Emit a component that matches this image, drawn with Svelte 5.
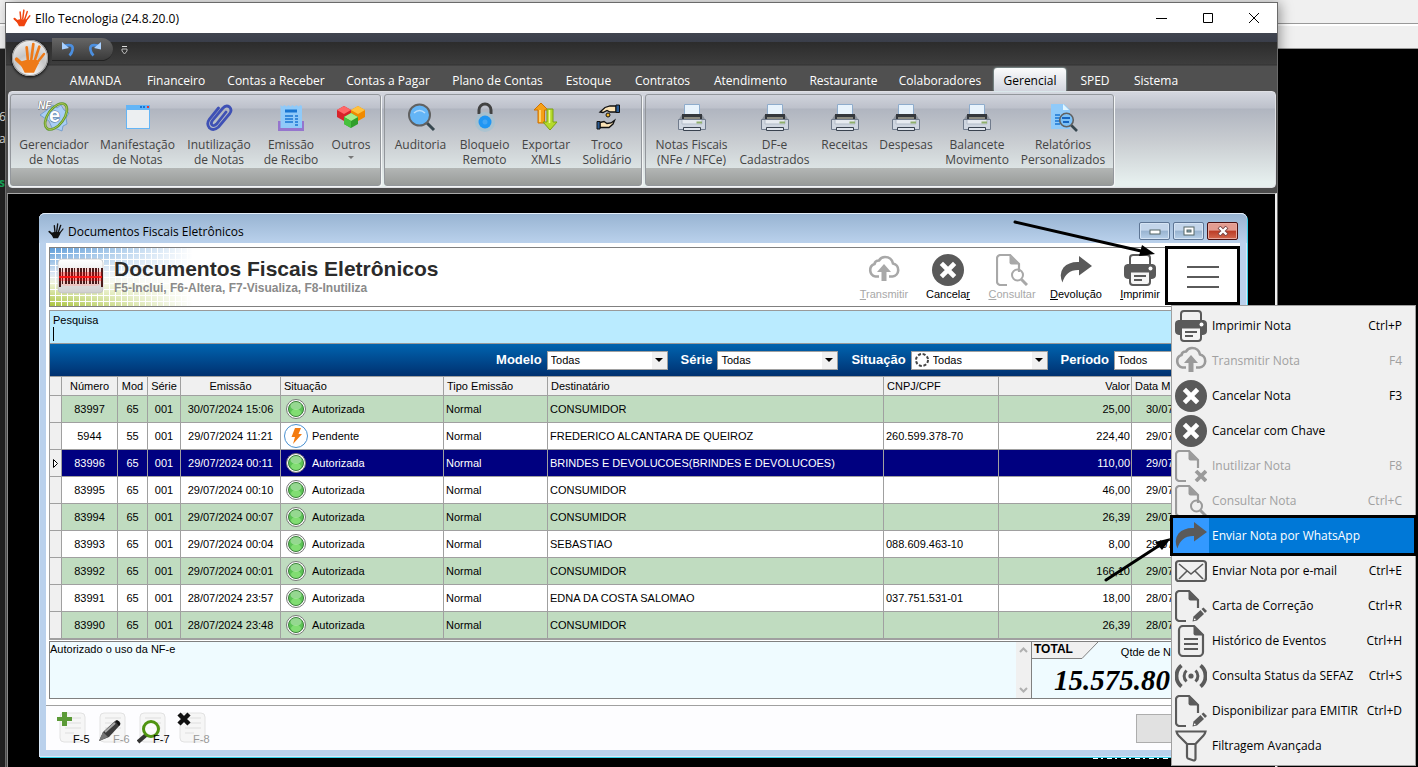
<script>
  const tabs = [
    { label: 'AMANDA', w: 79 }, { label: 'Financeiro', w: 82 }, { label: 'Contas a Receber', w: 118 },
    { label: 'Contas a Pagar', w: 106 }, { label: 'Plano de Contas', w: 113 }, { label: 'Estoque', w: 69 },
    { label: 'Contratos', w: 79 }, { label: 'Atendimento', w: 97 }, { label: 'Restaurante', w: 89 },
    { label: 'Colaboradores', w: 104 }, { label: 'Gerencial', w: 76 }, { label: 'SPED', w: 54 }, { label: 'Sistema', w: 68 }
  ];
  const groups = [
    [
      { icon: 'nfe', a: 'Gerenciador', b: 'de Notas', w: 80 },
      { icon: 'window', a: 'Manifestação', b: 'de Notas', w: 87 },
      { icon: 'clip', a: 'Inutilização', b: 'de Notas', w: 76 },
      { icon: 'receipt', a: 'Emissão', b: 'de Recibo', w: 68 },
      { icon: 'cubes', a: 'Outros', b: '', w: 52, drop: true }
    ],
    [
      { icon: 'lens', a: 'Auditoria', b: '', w: 65 },
      { icon: 'lock', a: 'Bloqueio', b: 'Remoto', w: 63 },
      { icon: 'arrows', a: 'Exportar', b: 'XMLs', w: 60 },
      { icon: 'hands', a: 'Troco', b: 'Solidário', w: 62 }
    ],
    [
      { icon: 'printer3d', a: 'Notas Fiscais', b: '(NFe / NFCe)', w: 85 },
      { icon: 'printer3d', a: 'DF-e', b: 'Cadastrados', w: 81 },
      { icon: 'printer3d', a: 'Receitas', b: '', w: 59 },
      { icon: 'printer3d', a: 'Despesas', b: '', w: 64 },
      { icon: 'printer3d', a: 'Balancete', b: 'Movimento', w: 78 },
      { icon: 'report', a: 'Relatórios', b: 'Personalizados', w: 94 }
    ]
  ];
  const actions = [
    { icon: 'cloud', pre: '', key: 'T', post: 'ransmitir', off: true },
    { icon: 'cancel', pre: 'Cancela', key: 'r', post: '' },
    { icon: 'docsearch', pre: '', key: 'C', post: 'onsultar', off: true },
    { icon: 'share', pre: '', key: 'D', post: 'evolução' },
    { icon: 'printer', pre: '', key: 'I', post: 'mprimir' }
  ];
  const rows = [
    ['83997', '65', '30/07/2024 15:06', 'Autorizada', 'CONSUMIDOR', '', '25,00', '30/07/2024'],
    ['5944', '55', '29/07/2024 11:21', 'Pendente', 'FREDERICO ALCANTARA DE QUEIROZ', '260.599.378-70', '224,40', '29/07/2024'],
    ['83996', '65', '29/07/2024 00:11', 'Autorizada', 'BRINDES E DEVOLUCOES(BRINDES E DEVOLUCOES)', '', '110,00', '29/07/2024'],
    ['83995', '65', '29/07/2024 00:10', 'Autorizada', 'CONSUMIDOR', '', '46,00', '29/07/2024'],
    ['83994', '65', '29/07/2024 00:07', 'Autorizada', 'CONSUMIDOR', '', '26,39', '29/07/2024'],
    ['83993', '65', '29/07/2024 00:04', 'Autorizada', 'SEBASTIAO', '088.609.463-10', '8,00', '29/07/2024'],
    ['83992', '65', '29/07/2024 00:01', 'Autorizada', 'CONSUMIDOR', '', '166,10', '29/07/2024'],
    ['83991', '65', '28/07/2024 23:57', 'Autorizada', 'EDNA DA COSTA SALOMAO', '037.751.531-01', '18,00', '28/07/2024'],
    ['83990', '65', '28/07/2024 23:48', 'Autorizada', 'CONSUMIDOR', '', '26,39', '28/07/2024']
  ];
  const menu = [
    { icon: 'printer', label: 'Imprimir Nota', key: 'Ctrl+P' },
    { icon: 'cloud', label: 'Transmitir Nota', key: 'F4', off: true },
    { icon: 'cancel', label: 'Cancelar Nota', key: 'F3' },
    { icon: 'cancel', label: 'Cancelar com Chave', key: '' },
    { icon: 'docx', label: 'Inutilizar Nota', key: 'F8', off: true },
    { icon: 'docsearch', label: 'Consultar Nota', key: 'Ctrl+C', off: true },
    { icon: 'share', label: 'Enviar Nota por WhatsApp', key: '', active: true },
    { icon: 'mail', label: 'Enviar Nota por e-mail', key: 'Ctrl+E' },
    { icon: 'docpen', label: 'Carta de Correção', key: 'Ctrl+R' },
    { icon: 'doclines', label: 'Histórico de Eventos', key: 'Ctrl+H' },
    { icon: 'signal', label: 'Consulta Status da SEFAZ', key: 'Ctrl+S' },
    { icon: 'docpen', label: 'Disponibilizar para EMITIR', key: 'Ctrl+D' },
    { icon: 'funnel', label: 'Filtragem Avançada', key: '' }
  ];
  const footer = [
    { icon: 'add', label: 'F-5' }, { icon: 'edit', label: 'F-6', off: true },
    { icon: 'view', label: 'F-7' }, { icon: 'del', label: 'F-8', off: true }
  ];
  const bars = Array.from({ length: 15 }, (_, i) => ({ x: 9 + i * 3, w: i % 4 === 1 ? 1 : 2, tall: i === 0 || i === 14 }));
</script>

{#snippet hand(color)}
  <g fill="none" stroke={color} stroke-linecap="round">
    <path d="M10.500 14 9.500 4" stroke-width="2" />
    <path d="M13 13 14.500 1.500" stroke-width="2" />
    <path d="M15.500 14 19 3.500" stroke-width="2" />
    <path d="M17 16 22.500 9" stroke-width="1.800" />
    <path d="M8.500 19 2 13" stroke-width="2.800" />
  </g>
  <path d="M9 13.500 17.500 13.500 18.500 16 15 23 8 23 4 15Z" fill={color} />
{/snippet}

{#snippet docShape()}
  <path d="M11 31H4.500A3.500 3.500 0 0 1 1 27.500V4.500A3.500 3.500 0 0 1 4.500 1H14L23 10V18" fill="none" stroke="currentColor" stroke-width="2.200" />
  <path d="M13.500 1.500V8.500Q13.500 10.500 15.500 10.500H22.500Z" fill="currentColor" />
{/snippet}

{#snippet glyph(name)}
  <svg class="glyph" viewBox="0 0 32 32" width="32" height="32" aria-hidden="true">
    {#if name === 'printer'}
      <path d="M6 10V4A3 3 0 0 1 9 1H23A3 3 0 0 1 26 4V10" fill="none" stroke="currentColor" stroke-width="2" />
      <path d="M3.500 10H28.500Q32 10.500 32 14V21Q32 24.500 28 25H4Q0 24.500 0 21V14Q0 10.500 3.500 10Z" fill="currentColor" />
      <circle cx="26.500" cy="14.500" r="2" fill="#fff" />
      <path d="M7 18.500H25V28A3 3 0 0 1 22 31H10A3 3 0 0 1 7 28Z" fill="#f5f5f5" />
      <path d="M6 23V28A3 3 0 0 0 9 31H23A3 3 0 0 0 26 28V23" fill="none" stroke="currentColor" stroke-width="2" />
      <path d="M10 22H22M10 26H18" stroke="currentColor" stroke-width="2" />
    {:else if name === 'cloud'}
      <path d="M11 22.500H7.500A6.500 6.500 0 0 1 6.500 10Q7 6.500 11 6.500Q13 3 17 3Q23.500 3 25 9.500A6.600 6.600 0 0 1 24.500 22.500H21" fill="none" stroke="currentColor" stroke-width="2.600" />
      <path d="M16 10 23 18H18.500V27H13.500V18H9Z" fill="currentColor" />
    {:else if name === 'cancel'}
      <circle cx="16" cy="16" r="16" fill="currentColor" />
      <path d="M11 11 21 21M21 11 11 21" stroke="#fff" stroke-width="4.600" stroke-linecap="square" />
    {:else if name === 'docx'}
      {@render docShape()}
      <path d="M21 21 31 31M31 21 21 31" stroke="currentColor" stroke-width="3.800" />
    {:else if name === 'docsearch'}
      {@render docShape()}
      <circle cx="21.500" cy="21" r="5.500" fill="none" stroke="currentColor" stroke-width="2" />
      <path d="M25.500 25.500 31 31" stroke="currentColor" stroke-width="3" />
    {:else if name === 'docpen'}
      {@render docShape()}
      <path d="M17.500 31.500 18.500 26.500 25.500 20 29 24 22 30.500Z" fill="currentColor" />
      <path d="M26.500 19 28.500 17.500 32 21 30 23Z" fill="currentColor" />
      <circle cx="19.700" cy="29.300" r=".9" fill="#fff" />
    {:else if name === 'share'}
      <path d="M19 2 32 12 19 21.500V16Q6 15.500 2.500 28.500Q-1.500 20 3.500 13.500Q9 7.500 19 8Z" fill="currentColor" />
    {:else if name === 'mail'}
      <rect x="1" y="6" width="30" height="20" rx="3" fill="none" stroke="currentColor" stroke-width="2.200" />
      <path d="M4 9 16 19 28 9M4 24 12 16M28 24 20 16" fill="none" stroke="currentColor" stroke-width="1.600" />
    {:else if name === 'doclines'}
      <path d="M8 1H19L28 10V27A4 4 0 0 1 24 31H8A4 4 0 0 1 4 27V5A4 4 0 0 1 8 1Z" fill="none" stroke="currentColor" stroke-width="2.200" />
      <path d="M18.500 1V8.500Q18.500 10.500 20.500 10.500H28Z" fill="currentColor" />
      <path d="M9 14H23M9 19H23M9 24H23" stroke="currentColor" stroke-width="2" />
    {:else if name === 'signal'}
      <circle cx="16" cy="16" r="2.600" fill="currentColor" />
      <path d="M11.500 10.500A7.500 7.500 0 0 0 11.500 21.500M20.500 10.500A7.500 7.500 0 0 1 20.500 21.500" fill="none" stroke="currentColor" stroke-width="3" />
      <path d="M6.500 5.500A13.500 13.500 0 0 0 6.500 26.500M25.500 5.500A13.500 13.500 0 0 1 25.500 26.500" fill="none" stroke="currentColor" stroke-width="3.800" />
    {:else if name === 'funnel'}
      <path d="M1.500 1.500H30.500Q30 4 28.500 5.500L20.500 14V28.500Q20.500 30.500 18.500 30.500L13 28.500Q12 28 12 26.500V14L3.500 5.500Q2 4 1.500 1.500Z" fill="none" stroke="currentColor" stroke-width="2.200" />
      <path d="M12 14H20.500" stroke="currentColor" stroke-width="2" />
    {/if}
  </svg>
{/snippet}

{#snippet picture(name)}
  <svg viewBox="0 0 32 32" width="32" height="32" aria-hidden="true">
    {#if name === 'nfe'}
      <path d="M9 9 15 4 19 7 23 4 26 9 31 12 28 17 29 23 25 25 24 30 19 28 14 27 11 20 2 14Z" fill="#a9cdf5" stroke="#6b97c8" stroke-width=".8" />
      <ellipse cx="18" cy="15.500" rx="8" ry="15" transform="rotate(36 18 15.500)" fill="none" stroke="#5f9a2e" stroke-width="2.600" />
      <ellipse cx="18" cy="15.500" rx="8" ry="15" transform="rotate(36 18 15.500)" fill="none" stroke="#c8d05a" stroke-width=".7" />
      <text class="e" x="11" y="21">e</text>
      <text class="nf" x="0" y="8">NF</text>
    {:else if name === 'window'}
      <path d="M4 4H28V28H4Z" fill="#64b5f6" /><path d="M5 9H27V27H5Z" fill="#eceff1" />
      <path d="M18 6H20M21 6H23" stroke="#1976d2" stroke-width="2" /><path d="M25 6H27" stroke="#e53935" stroke-width="2" />
    {:else if name === 'clip'}
      <path d="M23 11 13.500 23Q11 25.500 9 24Q7.500 22 9.500 19.500L19.500 7.500Q23 3.500 26.500 6Q29.500 9 26.500 13L15.500 26Q10.500 30.500 6.500 27Q3 23 6.500 18L15.500 7" fill="none" stroke="#3f51b5" stroke-width="2.800" stroke-linecap="round" />
    {:else if name === 'receipt'}
      <path d="M3 20H29V30H3Z" fill="#9575cd" />
      <path d="M5.500 4 7.500 5.500 9.500 4 11.500 5.500 13.500 4 15.500 5.500 17.500 4 19.500 5.500 21.500 4 23.500 5.500 25.500 4 27 5V27H5.500Z" fill="#90caf9" />
      <path d="M10 10H22" stroke="#1976d2" stroke-width="3" />
      <path d="M10 15H18M10 18H18M10 21H18M20 15H23M20 18H23M20 21H23M20 24H23" stroke="#1976d2" stroke-width="1.500" />
    {:else if name === 'cubes'}
      <path d="M2 9 9 5 16 9V16L9 20 2 16Z" fill="#d8232a" /><path d="M2 9 9 5 16 9 9 13Z" fill="#ff6868" />
      <path d="M16 9 23 5 30 9V16L23 20 16 16Z" fill="#f08a00" /><path d="M16 9 23 5 30 9 23 13Z" fill="#ffc23f" />
      <path d="M9 16 16 12 23 16V23L16 27 9 23Z" fill="#2f9e2a" /><path d="M9 16 16 12 23 16 16 20Z" fill="#a5ec8c" /><path d="M9 16 16 20V27L9 23Z" fill="#46c13c" />
    {:else if name === 'lens'}
      <path d="M22 22 29 29" stroke="#37474f" stroke-width="3" /><circle cx="14.500" cy="14" r="10.500" fill="#64b5f6" stroke="#616161" stroke-width="2" />
      <path d="M9 12Q14.500 7 20 12" fill="none" stroke="#bbdefb" stroke-width="1.600" />
    {:else if name === 'lock'}
      <path d="M10 13V9A6 6 0 0 1 22 9V13" fill="none" stroke="#424242" stroke-width="3" /><circle cx="16" cy="21" r="10" fill="#9fc3d4" opacity=".6" />
      <circle cx="16" cy="21" r="6.500" fill="#2196f3" /><circle cx="16" cy="21" r="2.500" fill="#42a5f5" />
    {:else if name === 'arrows'}
      <path d="M11 2 18 9H14.500V22H8V9H4Z" fill="#f5a117" stroke="#cf7100" /><path d="M10 9V21" stroke="#ffe08a" stroke-width="1.500" />
      <path d="M17 8H23V21H27L20 29 13 21H17Z" fill="#b4d92b" stroke="#7da112" /><path d="M19.500 9V22" stroke="#eef9a0" stroke-width="1.500" />
    {:else if name === 'hands'}
      <path d="M25 5H19L14 6.500 9 11 12 11.500 16 9.500 19 11H25Z" fill="#fbe3b6" stroke="#111" stroke-width="1.300" />
      <path d="M25 4H28.500V11.500H25Z" fill="#2b5c95" stroke="#111" /><circle cx="17" cy="14" r="2" fill="#f0b429" stroke="#111" />
      <path d="M9 21.500 13 20.500 16 22.500 20 22 23.500 19.500 22 23 18 26.500H9Z" fill="#fbe3b6" stroke="#111" stroke-width="1.300" /><path d="M6 20.500H9V28H6Z" fill="#2b5c95" stroke="#111" />
    {:else if name === 'printer3d'}
      <path d="M8.500 3.500H23.500V15H8.500Z" fill="#e8f3fc" stroke="#8eaccc" />
      <path d="M5.500 14H26.500L29.500 19H2.500Z" fill="#8b929b" /><path d="M6 13H26V18H6Z" fill="#34383d" /><path d="M8 16H24V18H8Z" fill="#8a8a80" />
      <path d="M2.500 18.500H29.500V28.500H2.500Z" fill="#cfd6e0" stroke="#707b8c" /><path d="M6 19V23H26V19" fill="#e6eaf0" stroke="#b3bcc9" />
      <path d="M20.500 20.500H26V22.500H20.500Z" fill="#8fae6c" /><path d="M7.500 26.500H24.500V29.500H7.500Z" fill="#dfe4ec" stroke="#39424f" />
    {:else if name === 'report'}
      <path d="M4 3H17L23 9V28H4Z" fill="#90caf9" /><path d="M16 3 22 9H16Z" fill="#e1f5fe" />
      <path d="M8 14H13M8 17H13M8 20H13M8 23H13" stroke="#1976d2" stroke-width="1.500" />
      <path d="M23 23 30 30" stroke="#37474f" stroke-width="2.600" /><circle cx="19.500" cy="19" r="6.800" fill="#7cc0f6" stroke="#616161" stroke-width="1.600" />
      <path d="M15 17H23M16 21H22" stroke="#1565c0" stroke-width="2.200" />
    {/if}
  </svg>
{/snippet}

<div class="desktop">
  <div class="backdrop" aria-hidden="true">
    <div class="strip"></div>
    <div class="strip"></div>
  </div>
  <div class="behind" aria-hidden="true"><span>6</span><span>as</span><span class="green">s</span></div>

  <main class="app">
    <header class="titlebar">
      <svg viewBox="0 0 24 24" width="18" height="18" aria-hidden="true">{@render hand('#f0440f')}</svg>
      <span class="caption">Ello Tecnologia (24.8.20.0)</span>
      <button aria-label="Minimizar"><svg width="12" height="12"><path d="M0 6.500H11" stroke="#000" /></svg></button>
      <button aria-label="Maximizar"><svg width="12" height="12"><path d="M1.500 1.500H10.500V10.500H1.500Z" fill="none" stroke="#000" /></svg></button>
      <button aria-label="Fechar"><svg width="12" height="12"><path d="M1 1 11 11M11 1 1 11" stroke="#000" /></svg></button>
    </header>

    <div class="chrome">
      <div class="quick">
        <div class="pill">
          <button aria-label="Desfazer"><svg viewBox="0 0 16 16" width="16" height="16"><path d="M3 5Q13 2 11.500 9Q11 12 8.500 14.500" fill="none" stroke="#4b8fe0" stroke-width="2.600" /><path d="M1 1V8.500L8 7Z" fill="#a8d0ff" /></svg></button>
          <button aria-label="Refazer"><svg viewBox="0 0 16 16" width="16" height="16"><path d="M13 5Q3 2 4.500 9Q5 12 7.500 14.500" fill="none" stroke="#4b8fe0" stroke-width="2.600" /><path d="M15 1V8.500L8 7Z" fill="#a8d0ff" /></svg></button>
        </div>
        <svg width="7" height="10" aria-hidden="true"><path d="M1 1.500H6" stroke="#ddd" /><path d="M1 4H6V6L3.500 9 1 6Z" fill="none" stroke="#bbb" /></svg>
      </div>
      <nav class="tabs">
        {#each tabs as t}
          <button class:on={t.label === 'Gerencial'} style:width="{t.w}px"><span>{t.label}</span></button>
        {/each}
      </nav>
      <button class="orb" aria-label="Menu Ello"><svg viewBox="0 0 24 24" width="32" height="32">{@render hand('#ee7a18')}</svg></button>
    </div>

    <div class="ribbon">
      {#each groups as g}
        <section class="group">
          <div class="tools">
            {#each g as t}
              <button style:width="{t.w}px">
                {@render picture(t.icon)}
                <span>{t.a}</span>
                <span>{t.b}</span>
                {#if t.drop}<i class="drop"></i>{/if}
              </button>
            {/each}
          </div>
          <div class="foot"></div>
        </section>
      {/each}
    </div>

    <div class="workspace">
      <div class="marks" aria-hidden="true"></div>
      <section class="doc">
        <header class="doctitle">
          <svg viewBox="0 0 24 24" width="16" height="16" aria-hidden="true">{@render hand('#111')}</svg>
          <span class="caption">Documentos Fiscais Eletrônicos</span>
          <button aria-label="Minimizar janela"><svg width="12" height="10"><rect x="1" y="4" width="10" height="4" fill="#fff" stroke="#566" /></svg></button>
          <button aria-label="Restaurar janela"><svg width="12" height="10"><rect x="1" y="1" width="10" height="8" fill="#fff" stroke="#566" /><rect x="4" y="4" width="4" height="2" fill="#8ab" stroke="#566" /></svg></button>
          <button class="close" aria-label="Fechar janela"><svg width="12" height="10"><path d="M2 1 10 9M10 1 2 9" stroke="#744" stroke-width="4" /><path d="M2.500 1.500 9.500 8.500M9.500 1.500 2.500 8.500" stroke="#fff" stroke-width="2.400" /></svg></button>
        </header>

        <div class="client">
          <div class="banner">
            <div class="mosaic">
              <svg viewBox="0 0 64 42" width="64" height="42" aria-hidden="true">
                <defs><linearGradient id="plate" x2="0" y2="1"><stop stop-color="#fff" /><stop offset="1" stop-color="#d0d0d0" /></linearGradient></defs>
                <rect x="8" y="3" width="45" height="34" rx="4" fill="url(#plate)" stroke="#bbb" stroke-width=".6" />
                <rect x="9" y="12" width="43" height="18" rx="6" fill="#ffb0a8" opacity=".5" />
                <g fill="#4a1c1c">
                  {#each bars as b}<rect x={b.x} y="12" width={b.w} height={b.tall ? 19 : 16} />{/each}
                </g>
                <rect x="9" y="16" width="43" height="9" fill="#f00" opacity=".3" /><rect x="9" y="20" width="43" height="2" fill="#f11" opacity=".9" />
              </svg>
            </div>
            <div class="heading">
              <h1>Documentos Fiscais Eletrônicos</h1>
              <p>F5-Inclui, F6-Altera, F7-Visualiza, F8-Inutiliza</p>
            </div>
            <div class="actions">
              {#each actions as a}
                <button class:off={a.off} disabled={a.off}>
                  {@render glyph(a.icon)}
                  <span>{a.pre}<u>{a.key}</u>{a.post}</span>
                </button>
              {/each}
              <button class="burger" aria-label="Menu">
                <svg width="32" height="22"><path d="M0 1H32M0 11H32M0 21H32" stroke="#5a5a5a" stroke-width="2" /></svg>
              </button>
            </div>
          </div>

          <div class="search">
            <label for="pesquisa">Pesquisa</label>
            <div class="entry"><i></i><input id="pesquisa" type="text" /></div>
          </div>

          <div class="filters">
            <label for="modelo">Modelo</label>
            <div class="combo"><select id="modelo"><option>Todas</option></select></div>
            <label for="serie">Série</label>
            <div class="combo"><select id="serie"><option>Todas</option></select></div>
            <label for="situacao">Situação</label>
            <div class="combo wide">
              <svg viewBox="0 0 16 16" width="16" height="16" aria-hidden="true"><circle cx="8" cy="8" r="6" fill="none" stroke="#444" stroke-width="2" stroke-dasharray="3 1.700" /></svg>
              <select id="situacao"><option>Todas</option></select>
            </div>
            <label for="periodo">Período</label>
            <div class="combo"><select id="periodo"><option>Todos</option></select></div>
          </div>

          <table>
            <colgroup>
              <col class="c0" /><col class="c1" /><col class="c2" /><col class="c3" /><col class="c4" /><col class="c5" />
              <col class="c6" /><col /><col class="c8" /><col class="c9" /><col class="c10" />
            </colgroup>
            <thead>
              <tr>
                <th aria-label="Marcador"></th><th class="mid">Número</th><th class="mid">Mod</th><th class="mid">Série</th><th class="mid">Emissão</th>
                <th>Situação</th><th>Tipo Emissão</th><th>Destinatário</th><th>CNPJ/CPF</th><th class="num">Valor</th><th>Data M</th>
              </tr>
            </thead>
            <tbody>
              {#each rows as r, i}
                <tr class:even={i % 2 === 0} class:sel={i === 2}>
                  <td class="gut">{#if i === 2}<svg width="5" height="9" aria-hidden="true"><path d="M.500 .500 4.500 4.500 .500 8.500Z" fill="#fff" stroke="#000" /></svg>{/if}</td>
                  <td class="mid">{r[0]}</td><td class="mid">{r[1]}</td><td class="mid">001</td><td class="mid">{r[2]}</td>
                  <td>
                    <div class="state">
                      <svg viewBox="0 0 24 24" width="24" height="24" aria-hidden="true">
                        {#if r[3] === 'Pendente'}
                          <circle cx="12" cy="12" r="11.500" fill="#fff" stroke="#4a90d0" /><path d="M11 4H17L14.500 10H18L9 20 11 13H7.500Z" fill="#f47b10" />
                        {:else}
                          <circle cx="12" cy="12" r="9.500" fill="#fff" stroke="#777" /><circle cx="12" cy="12" r="7.500" fill="#5cc455" stroke="#3b7d3a" />
                          <ellipse cx="12" cy="9" rx="5.500" ry="4" fill="#fff" opacity=".35" /><ellipse cx="12" cy="15.500" rx="5" ry="3.500" fill="#a5f590" opacity=".5" />
                        {/if}
                      </svg>
                      {r[3]}
                    </div>
                  </td>
                  <td>Normal</td><td>{r[4]}</td><td>{r[5]}</td><td class="num">{r[6]}</td><td class="date">{r[7]}</td>
                </tr>
              {/each}
            </tbody>
          </table>

          <div class="bottom">
            <div class="memo">
              <p>Autorizado o uso da NF-e</p>
              <div class="scroll" aria-hidden="true">
                <svg width="9" height="6"><path d="M1 5 4.500 1.500 8 5" fill="none" stroke="#b0b0b0" stroke-width="2" /></svg>
                <svg width="9" height="6"><path d="M1 1 4.500 4.500 8 1" fill="none" stroke="#b0b0b0" stroke-width="2" /></svg>
              </div>
            </div>
            <div class="total">
              <div class="line">
                <svg class="flap" width="66" height="17" aria-hidden="true"><path d="M0 0H66L50 16.500H0Z" fill="#f0f0f0" /><path d="M66 0 50 16.500H0" fill="none" stroke="#808080" /></svg>
                <strong>TOTAL</strong>
                <span>Qtde de N</span>
              </div>
              <output>15.575.80</output>
            </div>
          </div>

          <footer>
            {#each footer as f}
              <button class="page" class:off={f.off}>
                <svg viewBox="0 0 34 34" width="34" height="34" aria-hidden="true">
                  <rect x="3" y="2" width="25" height="29" rx="4" fill="#f6f6f6" stroke="#e2e2e2" />
                  <path d="M8 7H24M8 12H24M8 17H24M8 22H17" stroke="#dedede" />
                  {#if f.icon === 'add'}<path d="M5 1H10V6H15V10H10V15H5V10H0V6H5Z" fill="#5b9a37" />
                  {:else if f.icon === 'edit'}<path d="M2 30 6 21 18 10 23 14 12 26Z" fill="#3c3c3c" /><path d="M18 10 20 9Q23 10 23.500 13L22 15Z" fill="#111" /><path d="M8 21 18 12" stroke="#aaa" stroke-width="2" /><path d="M2 30 6 21 11 26Z" fill="#777" />
                  {:else if f.icon === 'view'}<path d="M9 24 1 31" stroke="#333" stroke-width="4" /><circle cx="14" cy="18" r="7.500" fill="#fff" fill-opacity=".7" stroke="#4f9410" stroke-width="3" />
                  {:else}<path d="M2 3 12 13M12 3 2 13" stroke="#111" stroke-width="4.500" />{/if}
                </svg>
                <span>{f.label}</span>
              </button>
            {/each}
            <button class="plain" aria-label="Fechar"></button>
          </footer>
        </div>
      </section>
    </div>
  </main>

  <ul class="menu">
    {#each menu as m}
      <li>
        <button class:active={m.active} class:off={m.off} disabled={m.off}>
          <span class="cell">{@render glyph(m.icon)}</span>
          <span class="name">{m.label}</span>
          <kbd>{m.key}</kbd>
        </button>
      </li>
    {/each}
  </ul>

  <svg class="pointer first" width="144" height="38" viewBox="0 0 144 38" aria-hidden="true"><path d="M2 2 128 31" stroke="#000" stroke-width="3" stroke-linecap="round" /><path d="M142 34 126 36 129 25Z" /></svg>
  <svg class="pointer second" width="68" height="46" viewBox="0 0 68 46" aria-hidden="true"><path d="M2 44 56 9" stroke="#000" stroke-width="3" stroke-linecap="round" /><path d="M67 2 58 14 51 6Z" /></svg>
</div>

<style>
  :global(body) { background: #000; }
  .desktop { position: relative; min-height: 100vh; overflow: hidden; box-sizing: border-box; padding: 3px 141px 0 6px; background: linear-gradient(90deg, #222 6px, #000 6px); font: 12px/15px "Open Sans", "Noto Sans", sans-serif; color: #000; }
  button { font: inherit; color: inherit; background: none; border: 0; padding: 0; margin: 0; }
  svg { display: block; flex: none; }

  .backdrop { position: absolute; inset: 0 0 auto 0; }
  .strip { box-sizing: border-box; height: 24px; background: #f0f0f0; border-bottom: 1px solid #999; }
  .strip + .strip { height: 25px; border-top: 1px solid #fff; box-shadow: 0 1px 0 #fff inset; }
  .behind { position: absolute; left: 0; top: 109px; width: 6px; overflow: hidden; display: flex; flex-direction: column; gap: 7px; color: #ddd; }
  .behind span { margin-left: -1px; }
  .behind .green { margin-top: 22px; color: #18a558; font-weight: bold; }

  .app { position: relative; display: flex; flex-direction: column; min-height: calc(100vh - 3px); background: #4b4b4b; box-shadow: 0 0 0 1px #6a6a6a, 3px 0 12px rgba(0, 0, 0, .4); }
  .titlebar { display: flex; align-items: center; height: 30px; background: #fff; padding-left: 7px; }
  .titlebar .caption { flex: 1; margin-left: 4px; }
  .titlebar button { width: 46px; display: flex; justify-content: center; }

  .chrome { position: relative; background: linear-gradient(#41454f, #3a3e4a 9px, #2c2c2c 9px, #3d3d3d 31px, #323232 32px, #505050 33px); }
  .quick { display: flex; align-items: center; gap: 8px; height: 33px; padding-left: 46px; }
  .pill { display: flex; align-items: center; gap: 9px; box-sizing: border-box; width: 61px; height: 23px; padding-left: 9px; border-radius: 0 12px 12px 0; background: linear-gradient(#666, #3b3b3b); border-bottom: 1px solid #222; }
  .tabs { display: flex; height: 25px; padding-left: 50px; color: #fff; }
  .tabs button { flex: none; display: flex; justify-content: center; padding: 2px 2px 0; white-space: nowrap; }
  .tabs span { flex: 1; padding-top: 5px; height: 18px; }
  .tabs .on span { color: #000; background: linear-gradient(#fbfcfc, #d2d5de); border-radius: 3px 3px 0 0; box-shadow: 0 0 2px #cff; }
  .orb { position: absolute; left: 6px; top: 7px; width: 36px; height: 36px; display: grid; place-items: center; border-radius: 50%; background: radial-gradient(circle at 50% 85%, #fff, #c6c6c6 45%, #f4f4f4 90%); box-shadow: 0 0 0 1px #999 inset, 0 1px 3px #000; }

  .ribbon { display: flex; gap: 3px; margin: 0 1px 5px 2px; padding: 2px 1px 1px; border: 1px solid #dfe0e4; border-radius: 4px; background: linear-gradient(#d4d7df, #bdc1cb 16px, #b0b5c0 17px, #c9cdd1 50px, #e6efee 90px); }
  .group { border: 1px solid #93979c; border-radius: 3px; box-shadow: 1px 1px 0 #f4f6f6; }
  .tools { display: flex; height: 73px; padding: 0 3px; color: #444; }
  .tools button { position: relative; display: flex; flex-direction: column; align-items: center; padding-top: 6px; white-space: nowrap; }
  .tools svg { margin-bottom: 4px; }
  .e { font: bold 20px "Liberation Sans", sans-serif; fill: #fff; stroke: #4f7396; stroke-width: 1px; paint-order: stroke; }
  .nf { font: italic bold 10px "Liberation Sans", sans-serif; fill: #fff; stroke: #666; stroke-width: 1px; paint-order: stroke; }
  .foot { height: 17px; background: linear-gradient(#b3b6b5, #989b99); }
  .drop { position: absolute; bottom: 9px; border: 3px solid transparent; border-top-color: #777; border-bottom: 0; }

  .workspace { position: relative; flex: 1; box-sizing: border-box; margin-left: 1px; padding: 19px 28px 0 31px; background: #000; border-left: 1px solid #8a8a8a; border-top: 1px solid #aaa; border-right: 2px solid #eee; }
  .marks { position: absolute; right: 90px; top: 564px; width: 92px; height: 1px; background: repeating-linear-gradient(90deg, #fff 0 5px, #000 5px 8px, #fff 8px 10px, #000 10px 14px); }

  .doc { position: relative; font: 11px/14px "Liberation Sans", Arial, sans-serif; padding: 0 7px 7px; background: #bad1ec; border-radius: 6px 6px 0 0; box-shadow: 0 0 0 1px #d8e8f8 inset, 1px 1px 0 #35d0e8; }
  .doctitle { display: flex; align-items: center; gap: 3px; height: 30px; margin: 0 -7px; padding: 0 9px; background: linear-gradient(#98b4d2, #bad1ec); border-radius: 6px 6px 0 0; border-top: 1px solid #e4eefa; box-sizing: border-box; }
  .doctitle .caption { flex: 1; font: 12px/15px "Open Sans", "Noto Sans", sans-serif; margin: 6px 0 0 1px; }
  .doctitle > svg { margin-top: 5px; }
  .doctitle button { width: 31px; height: 18px; margin-top: 4px; display: grid; place-items: center; border: 1px solid #5d7594; border-radius: 2px; background: linear-gradient(#c3d5ea 45%, #98b3d0 50%, #b7cfe8); box-shadow: 0 0 0 1px #d5e4f4 inset; }
  .doctitle .close { border-color: #4a1010; background: linear-gradient(#e39c90 45%, #bb3c26 50%, #d3694f); box-shadow: 0 0 0 1px #e8aaa0 inset; }

  .client { background: #fff; padding: 4px 1px 0 3px; }
  .banner { display: flex; height: 58px; border: 1px solid #808080; }
  .mosaic { display: flex; align-items: center; width: 150px; margin-right: -86px; background:
    linear-gradient(90deg, transparent, #fff 95%),
    repeating-linear-gradient(90deg, transparent 0 5px, #fff 5px 6px),
    repeating-linear-gradient(transparent 0 5px, #fff 5px 6px),
    linear-gradient(#5b9bd8, #dfe9f5 45%, #f2f5dd 60%, #a9c43c); }
  .heading { flex: 1; padding-top: 9px; white-space: nowrap; }
  h1 { margin: 0; font: bold 21px/24px "Liberation Sans", Arial, sans-serif; color: #2b2b2b; }
  .heading p { margin: 0; font-weight: bold; font-size: 12px; line-height: 14px; color: #8a8a8a; }
  .actions { display: flex; color: #000; }
  .actions button { width: 64px; display: flex; flex-direction: column; align-items: center; gap: 1px; padding-top: 6px; white-space: nowrap; }
  .actions .glyph { color: #5a5a5a; }
  .actions .off, .actions .off .glyph { color: #a8a8a8; }
  .actions .burger { width: 75px; height: 59px; margin: -2px -2px 0 -7px; padding: 3px 0 0; gap: 0; justify-content: center; border: 3px solid #000; background: #fff; box-sizing: border-box; z-index: 1; }

  .search { margin-top: 3px; padding: 2px 3px 0; height: 30px; border: 1px solid #999; background: #baebff; }
  .search label { display: block; }
  .entry { display: flex; }
  .entry i { width: 1px; height: 14px; background: #000; }
  .entry input { flex: 1; height: 13px; border: 0; padding: 0; background: none; outline: 0; }

  .filters { display: flex; justify-content: flex-end; align-items: center; height: 32px; padding-right: 4px; background: linear-gradient(#0064b0, #00306f); border-left: 1px solid #999; color: #fff; font-weight: bold; font-size: 13px; }
  .filters label { margin-right: 5px; }
  .filters .combo { margin-right: 13px; }
  .filters .combo:last-child { margin-right: 0; }
  .combo { position: relative; display: flex; align-items: center; box-sizing: border-box; width: 121px; height: 19px; background: #fff; border: 1px solid #a0a0a0; }
  .combo.wide { width: 137px; }
  .combo svg { margin-left: 2px; }
  .combo select { flex: 1; width: 0; height: 17px; appearance: none; border: 0; padding: 0 3px; background: none; font: 11px/15px "Liberation Sans", Arial, sans-serif; color: #000; outline: 0; }
  .combo::after { content: ""; position: absolute; right: 4px; border: 4px solid transparent; border-top-color: #000; border-bottom: 0; pointer-events: none; }
  .combo::before { content: ""; position: absolute; right: 0; width: 15px; height: 17px; background: #f0f0f0; }

  table { width: 100%; table-layout: fixed; border-collapse: collapse; border: 1px solid #a0a0a0; border-width: 1px 0 2px 1px; }
  .c0 { width: 12px; } .c1 { width: 56px; } .c2 { width: 30px; } .c3 { width: 33px; } .c4 { width: 100px; } .c5 { width: 163px; }
  .c6 { width: 104px; } .c8 { width: 115px; } .c9 { width: 133px; } .c10 { width: 107px; }
  th, td { padding: 0 2px; text-align: left; font-weight: normal; white-space: nowrap; overflow: hidden; border-right: 1px solid #a0a0a0; border-bottom: 1px solid #a0a0a0; }
  th { height: 18px; padding-left: 3px; background: #f0f0f0; }
  td { height: 26px; }
  .mid { text-align: center; padding: 0; }
  .num { text-align: right; padding-right: 1px; }
  .date { padding-left: 14px; }
  .even { background: #c0dcc0; }
  .sel { background: #000080; color: #fff; }
  .gut { background: #f0f0f0; padding: 0 0 0 3px; }
  .state { display: flex; align-items: center; gap: 4px; padding-left: 1px; }

  .bottom { display: flex; margin-top: 1px; height: 58px; }
  .memo { flex: 1; display: flex; justify-content: space-between; border: 1px solid #808080; background: #effbff; }
  .memo p { margin: 0; }
  .scroll { width: 15px; display: flex; flex-direction: column; align-items: center; justify-content: space-between; padding: 5px 0; background: #f0f0f0; }
  .total { box-sizing: border-box; width: 207px; border: 1px solid #808080; border-left: 0; background: #effbff; }
  .line { position: relative; display: flex; justify-content: space-between; padding-right: 67px; }
  .flap { position: absolute; left: 0; top: 0; }
  .line strong { position: relative; margin-left: 2px; font-size: 12px; line-height: 15px; }
  .line span { padding-top: 3px; }
  output { display: block; margin: 5px 0 0 22px; font: italic bold 29px/32px "Liberation Serif", "Times New Roman", serif; }

  footer { display: flex; align-items: flex-start; margin: 6px -1px 0 -3px; padding: 4px 5px 0 11px; height: 40px; border-top: 1px solid #a0a0a0; background: #fdfdff; }
  .page { position: relative; width: 40px; height: 36px; }
  .page span { position: absolute; left: 16px; bottom: 0; }
  .page.off span { color: #999; }
  .plain { width: 99px; height: 29px; margin: 4px 0 0 auto; background: #e1e1e1; border: 1px solid #adadad; }

  .menu { position: absolute; top: 305px; right: 2px; width: 245px; box-sizing: border-box; margin: 0; padding: 2px 1px; list-style: none; background: #f0f0f0; border: 1px solid #a0a0a0; z-index: 2; }
  .menu button { position: relative; display: flex; align-items: center; width: 100%; height: 35px; text-align: left; }
  .cell { display: grid; place-items: center; width: 36px; height: 35px; color: #5a5a5a; }
  .name { flex: 1; padding-left: 3px; white-space: nowrap; }
  kbd { font: inherit; padding-right: 12px; }
  .menu .off { color: #a0a0a0; }
  .menu .off .cell { color: #9a9a9a; }
  .menu .active { background: #0078d7; color: #fff; box-shadow: 0 0 0 3px #000; z-index: 1; }
  .menu .active .cell { background: #3399ff; }

  .pointer { position: absolute; z-index: 3; }
  .first { top: 220px; right: 261px; }
  .second { top: 536px; right: 246px; }
</style>
